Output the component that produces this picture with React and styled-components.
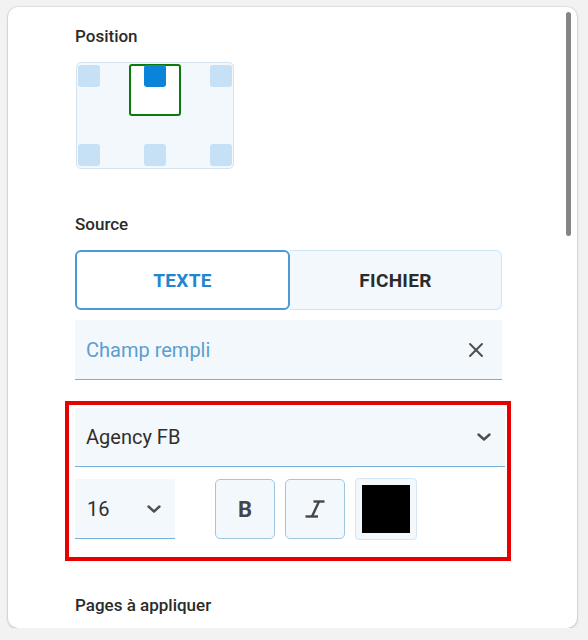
import React from "react";
import styled, { createGlobalStyle } from "styled-components";
import { X } from "lucide-react";

const Global = createGlobalStyle`
  html, body { margin: 0; padding: 0; background: #f2f2f2; }
  body { font-family: Roboto, "Noto Sans", Arial, sans-serif; color: #2b2b2b; }
  * { box-sizing: border-box; }
`;

const Card = styled.div`
  position: relative;
  margin: 7px 0 0 8px;
  width: 569px;
  height: 621px;
  background: #fff;
  border-radius: 10px;
  box-shadow: 0 0 0 1px rgba(0,0,0,0.05), 0 1px 3px rgba(0,0,0,0.18);
  overflow: hidden;
  padding: 19px 72px 0 67px;
`;

const ScrollThumb = styled.div`
  position: absolute;
  top: 5px;
  right: 6px;
  width: 5px;
  height: 224px;
  border-radius: 3px;
  background: #858585;
`;

const Label = styled.div`
  font-size: 17px;
  font-weight: 500;
  line-height: 20px;
  color: #2b2b2b;
  margin: ${p => p.$mt || 0}px 0 ${p => p.$mb || 0}px;
`;

const Pad = styled.div`
  position: relative;
  width: 158px;
  height: 107px;
  margin-left: 1px;
  padding: 2px 1px;
  border: 1px solid #d3e4f0;
  border-radius: 5px;
  background: #f3f8fc;
  display: grid;
  grid-template-columns: repeat(3, 22px);
  grid-template-rows: repeat(2, 22px);
  justify-content: space-between;
  align-content: space-between;
`;

const Frame = styled.div`
  position: absolute;
  left: 52px;
  top: 1px;
  width: 52px;
  height: 52px;
  border: 2px solid #0a7a0a;
  border-radius: 3px;
  background: #fff;
`;

const Anchor = styled.div`
  position: relative;
  z-index: 1;
  width: 22px;
  height: 22px;
  border-radius: 3px;
  background: ${p => (p.$active ? "#0a84d8" : "#c6e1f6")};
`;

const Toggle = styled.div`
  display: flex;
  width: 427px;
  height: 60px;
`;

const ToggleBtn = styled.button`
  flex: 1;
  font-family: Roboto, Arial, sans-serif;
  font-size: 19px;
  font-weight: 700;
  letter-spacing: 0.3px;
  cursor: pointer;
  border-radius: ${p => (p.$active ? "6px" : "0 6px 6px 0")};
  border: ${p => (p.$active ? "2px solid #4b9ad6" : "1px solid #d1e4f1")};
  border-left-width: ${p => (p.$active ? "2px" : "0")};
  background: ${p => (p.$active ? "#fff" : "#f3f8fc")};
  color: ${p => (p.$active ? "#1f87cf" : "#2b2b2b")};
`;

const Field = styled.div`
  display: flex;
  align-items: center;
  justify-content: space-between;
  width: ${p => p.$w || 427}px;
  height: ${p => p.$h || 60}px;
  margin-top: ${p => p.$mt || 0}px;
  padding: 0 ${p => p.$pr || 14}px 0 ${p => p.$pl || 11}px;
  background: #f3f8fc;
  border-bottom: 1px solid #79b0d8;
  font-size: 20px;
  color: ${p => p.$color || "#2f2f2f"};
`;

const IconBtn = styled.span`
  display: flex;
  color: #4f4f4f;
`;

const Highlight = styled.div`
  width: 446px;
  margin: 21px 0 0 -10px;
  padding: 3px 3px 17px 6px;
  border: 4px solid #e60000;
`;

const FormatRow = styled.div`
  display: flex;
  align-items: center;
  margin-top: 11px;
`;

const StyleBtn = styled.button`
  display: flex;
  align-items: center;
  justify-content: center;
  width: 60px;
  height: 60px;
  margin-left: ${p => p.$ml || 10}px;
  padding: 0;
  border: 1px solid #9fc6e0;
  border-radius: 5px;
  background: #f3f8fc;
  color: #454545;
  font-family: Roboto, Arial, sans-serif;
  font-size: 22px;
  font-weight: 700;
  cursor: pointer;
`;

const Swatch = styled.div`
  width: 62px;
  height: 62px;
  margin-left: 10px;
  padding: 6px;
  border: 1px solid #d5e6f2;
  border-radius: 4px;
  background: #f3f8fc;
`;

const SwatchColor = styled.div`
  width: 100%;
  height: 100%;
  background: ${p => p.$color};
`;

const Chevron = () => (
  <svg width="14" height="8" viewBox="0 0 14 8" fill="none">
    <polyline points="1.5,1.5 7,6.5 12.5,1.5" stroke="currentColor" strokeWidth="2.4" strokeLinecap="round" strokeLinejoin="round" />
  </svg>
);

const ItalicIcon = () => (
  <svg width="20" height="18" viewBox="0 0 20 18" fill="none" stroke="currentColor" strokeWidth="2.4">
    <line x1="8.5" y1="1.5" x2="19.5" y2="1.5" />
    <line x1="14" y1="1.5" x2="7" y2="16.5" />
    <line x1="0.5" y1="16.5" x2="13" y2="16.5" />
  </svg>
);

export default function App() {
  const anchors = [0, 1, 2, 3, 4, 5];
  return (
    <>
      <Global />
      <Card>
        <ScrollThumb />
        <Label $mb={16}>Position</Label>
        <Pad>
          <Frame />
          {anchors.map(i => (
            <Anchor key={i} $active={i === 1} />
          ))}
        </Pad>

        <Label $mt={45} $mb={16}>Source</Label>
        <Toggle>
          <ToggleBtn $active>TEXTE</ToggleBtn>
          <ToggleBtn>FICHIER</ToggleBtn>
        </Toggle>
        <Field $mt={10} $color="#5b9ed1">
          <span>Champ rempli</span>
          <IconBtn><X size={24} strokeWidth={1.9} /></IconBtn>
        </Field>

        <Highlight>
          <Field $w={430} $h={59}>
            <span>Agency FB</span>
            <IconBtn><Chevron /></IconBtn>
          </Field>
          <FormatRow>
            <Field $w={100} $h={60} $pl={12} $pr={14}>
              <span>16</span>
              <IconBtn><Chevron /></IconBtn>
            </Field>
            <StyleBtn $ml={40}>B</StyleBtn>
            <StyleBtn><ItalicIcon /></StyleBtn>
            <Swatch><SwatchColor $color="#000" /></Swatch>
          </FormatRow>
        </Highlight>

        <Label $mt={34}>Pages à appliquer</Label>
      </Card>
    </>
  );
}
